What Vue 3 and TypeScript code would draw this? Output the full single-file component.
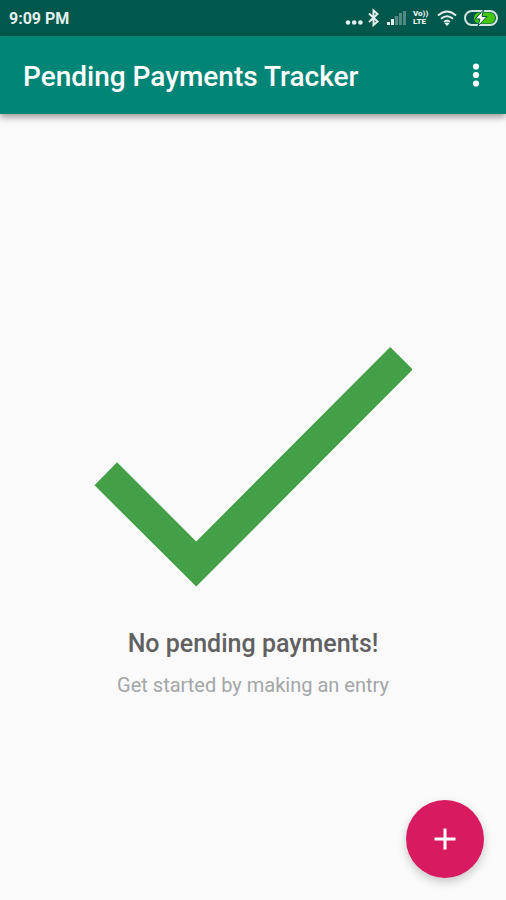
<script setup lang="ts">
import { ref } from 'vue'

const time = ref<string>('9:09 PM')
const title = ref<string>('Pending Payments Tracker')
const entries = ref<string[]>([])
</script>

<template>
  <div class="screen">
    <div class="status">
      <span class="clock">{{ time }}</span>
      <div class="indicators">
        <svg class="dots" width="18" height="20" viewBox="0 0 18 20" aria-hidden="true">
          <circle cx="3" cy="14.500" r="2.300" />
          <circle cx="9.200" cy="14.500" r="2.300" />
          <circle cx="15.400" cy="14.500" r="2.300" />
        </svg>
        <svg class="bluetooth" width="12" height="20" viewBox="0 0 12 20" aria-hidden="true">
          <path d="M2 5.500 10.500 13.500 6.500 17V2.500L10.500 6 2 14" />
        </svg>
        <svg class="signal" width="20" height="20" viewBox="0 0 20 20" aria-hidden="true">
          <rect x="1" y="14" width="3" height="3" />
          <rect x="5" y="11" width="3" height="6" />
          <rect class="off" x="9" y="8" width="3" height="9" />
          <rect class="off" x="13" y="5" width="3" height="12" />
          <rect class="off" x="17" y="3" width="3" height="14" />
        </svg>
        <span class="volte"><span>Vo))</span><span>LTE</span></span>
        <svg class="wifi" width="20" height="20" viewBox="0 0 20 20" aria-hidden="true">
          <path d="M1 7.500Q10-.5 19 7.500M4 10.800q6-5.200 12 0M7 13.900q3-2.500 6 0" />
          <path class="tip" d="m7.500 15.300 2.500 2.700 2.500-2.700q-2.500-1.800-5 0Z" />
        </svg>
        <svg class="battery" width="34" height="20" viewBox="0 0 34 20" aria-hidden="true">
          <rect class="charge" x="10" y="4.500" width="21" height="11" rx="5.500" />
          <rect class="shell" x="1" y="3" width="32" height="14" rx="7" />
          <path class="bolt" d="M19.500 2 11 11h5l-2 7 9-9.500h-5Z" />
        </svg>
      </div>
    </div>

    <header class="bar">
      <h1>{{ title }}</h1>
      <button class="more" type="button" aria-label="More options">
        <svg width="8" height="24" viewBox="0 0 8 24" aria-hidden="true">
          <circle cx="4" cy="3.500" r="3.100" />
          <circle cx="4" cy="12" r="3.100" />
          <circle cx="4" cy="20.500" r="3.100" />
        </svg>
      </button>
    </header>

    <main class="content">
      <section v-if="entries.length === 0" class="empty">
        <svg class="check" viewBox="0 0 318 239" aria-hidden="true">
          <path d="M.5 138 23 115 102 194 295.500 0 318 22.500 102 239Z" />
        </svg>
        <h2>No pending payments!</h2>
        <p>Get started by making an entry</p>
      </section>
    </main>

    <button class="add" type="button" aria-label="Add entry">
      <svg width="22" height="22" viewBox="0 0 22 22" aria-hidden="true">
        <path d="M11 .5v21M.5 11h21" />
      </svg>
    </button>
  </div>
</template>

<style>
body {
  margin: 0;
  background: #fafafa;
}
</style>

<style scoped>
.screen {
  display: flex;
  flex-direction: column;
  min-height: 100vh;
  background: #fafafa;
  font-family: Roboto, "Liberation Sans", sans-serif;
}

.status {
  display: flex;
  align-items: center;
  justify-content: space-between;
  height: 36px;
  padding: 0 8px 0 9px;
  background: #00574b;
  color: #e3efed;
}

.clock {
  padding-top: 2px;
  font-size: 16px;
  font-weight: 700;
  line-height: 20px;
}

.indicators {
  display: flex;
  align-items: center;
  gap: 7px;
}

.indicators svg {
  display: block;
  fill: #e3efed;
}

.indicators .dots {
  margin-right: -3px;
}

.indicators .bluetooth {
  fill: none;
  stroke: #e3efed;
  stroke-width: 2;
}

.signal .off {
  opacity: 0.35;
}

.volte {
  display: flex;
  flex-direction: column;
  width: 17px;
  font-size: 8px;
  font-weight: 900;
  line-height: 8px;
}

.indicators .wifi {
  fill: none;
  stroke: #e3efed;
  stroke-width: 2;
}

.wifi .tip {
  fill: #e3efed;
  stroke: none;
}

.battery .charge {
  fill: #45c80c;
}

.battery .shell {
  fill: none;
  stroke: #d3e4e1;
  stroke-width: 2;
}

.battery .bolt {
  fill: #fff;
  stroke: #00574b;
  stroke-width: 1;
}

.bar {
  display: flex;
  align-items: center;
  justify-content: space-between;
  height: 78px;
  padding: 0 15px 0 23px;
  background: #008577;
  box-shadow: 0 3px 7px rgba(0, 0, 0, 0.4);
  color: #fff;
}

h1 {
  margin: 0;
  padding-top: 3px;
  font-size: 28px;
  font-weight: 500;
  line-height: 36px;
}

button {
  display: flex;
  align-items: center;
  justify-content: center;
  padding: 0;
  border: 0;
  cursor: pointer;
}

.more {
  width: 30px;
  height: 48px;
  background: transparent;
}

.more svg {
  fill: #fff;
}

.content {
  display: flex;
  flex: 1;
  align-items: center;
  justify-content: center;
  padding-top: 32px;
}

.empty {
  display: flex;
  flex-direction: column;
  align-items: center;
  width: 100%;
  text-align: center;
}

.check {
  display: block;
  width: 63%;
  fill: #43a047;
}

h2 {
  margin: 40px 0 0;
  color: #616161;
  font-size: 25px;
  font-weight: 500;
  line-height: 34px;
}

p {
  margin: 10px 0 0;
  color: #a3a6a8;
  font-size: 20px;
  line-height: 28px;
}

.add {
  position: fixed;
  right: 22px;
  bottom: 22px;
  width: 78px;
  height: 78px;
  border-radius: 50%;
  background: #d81b60;
  box-shadow: 0 4px 10px rgba(0, 0, 0, 0.2);
}

.add svg {
  fill: none;
  stroke: #fff;
  stroke-width: 3;
}
</style>
